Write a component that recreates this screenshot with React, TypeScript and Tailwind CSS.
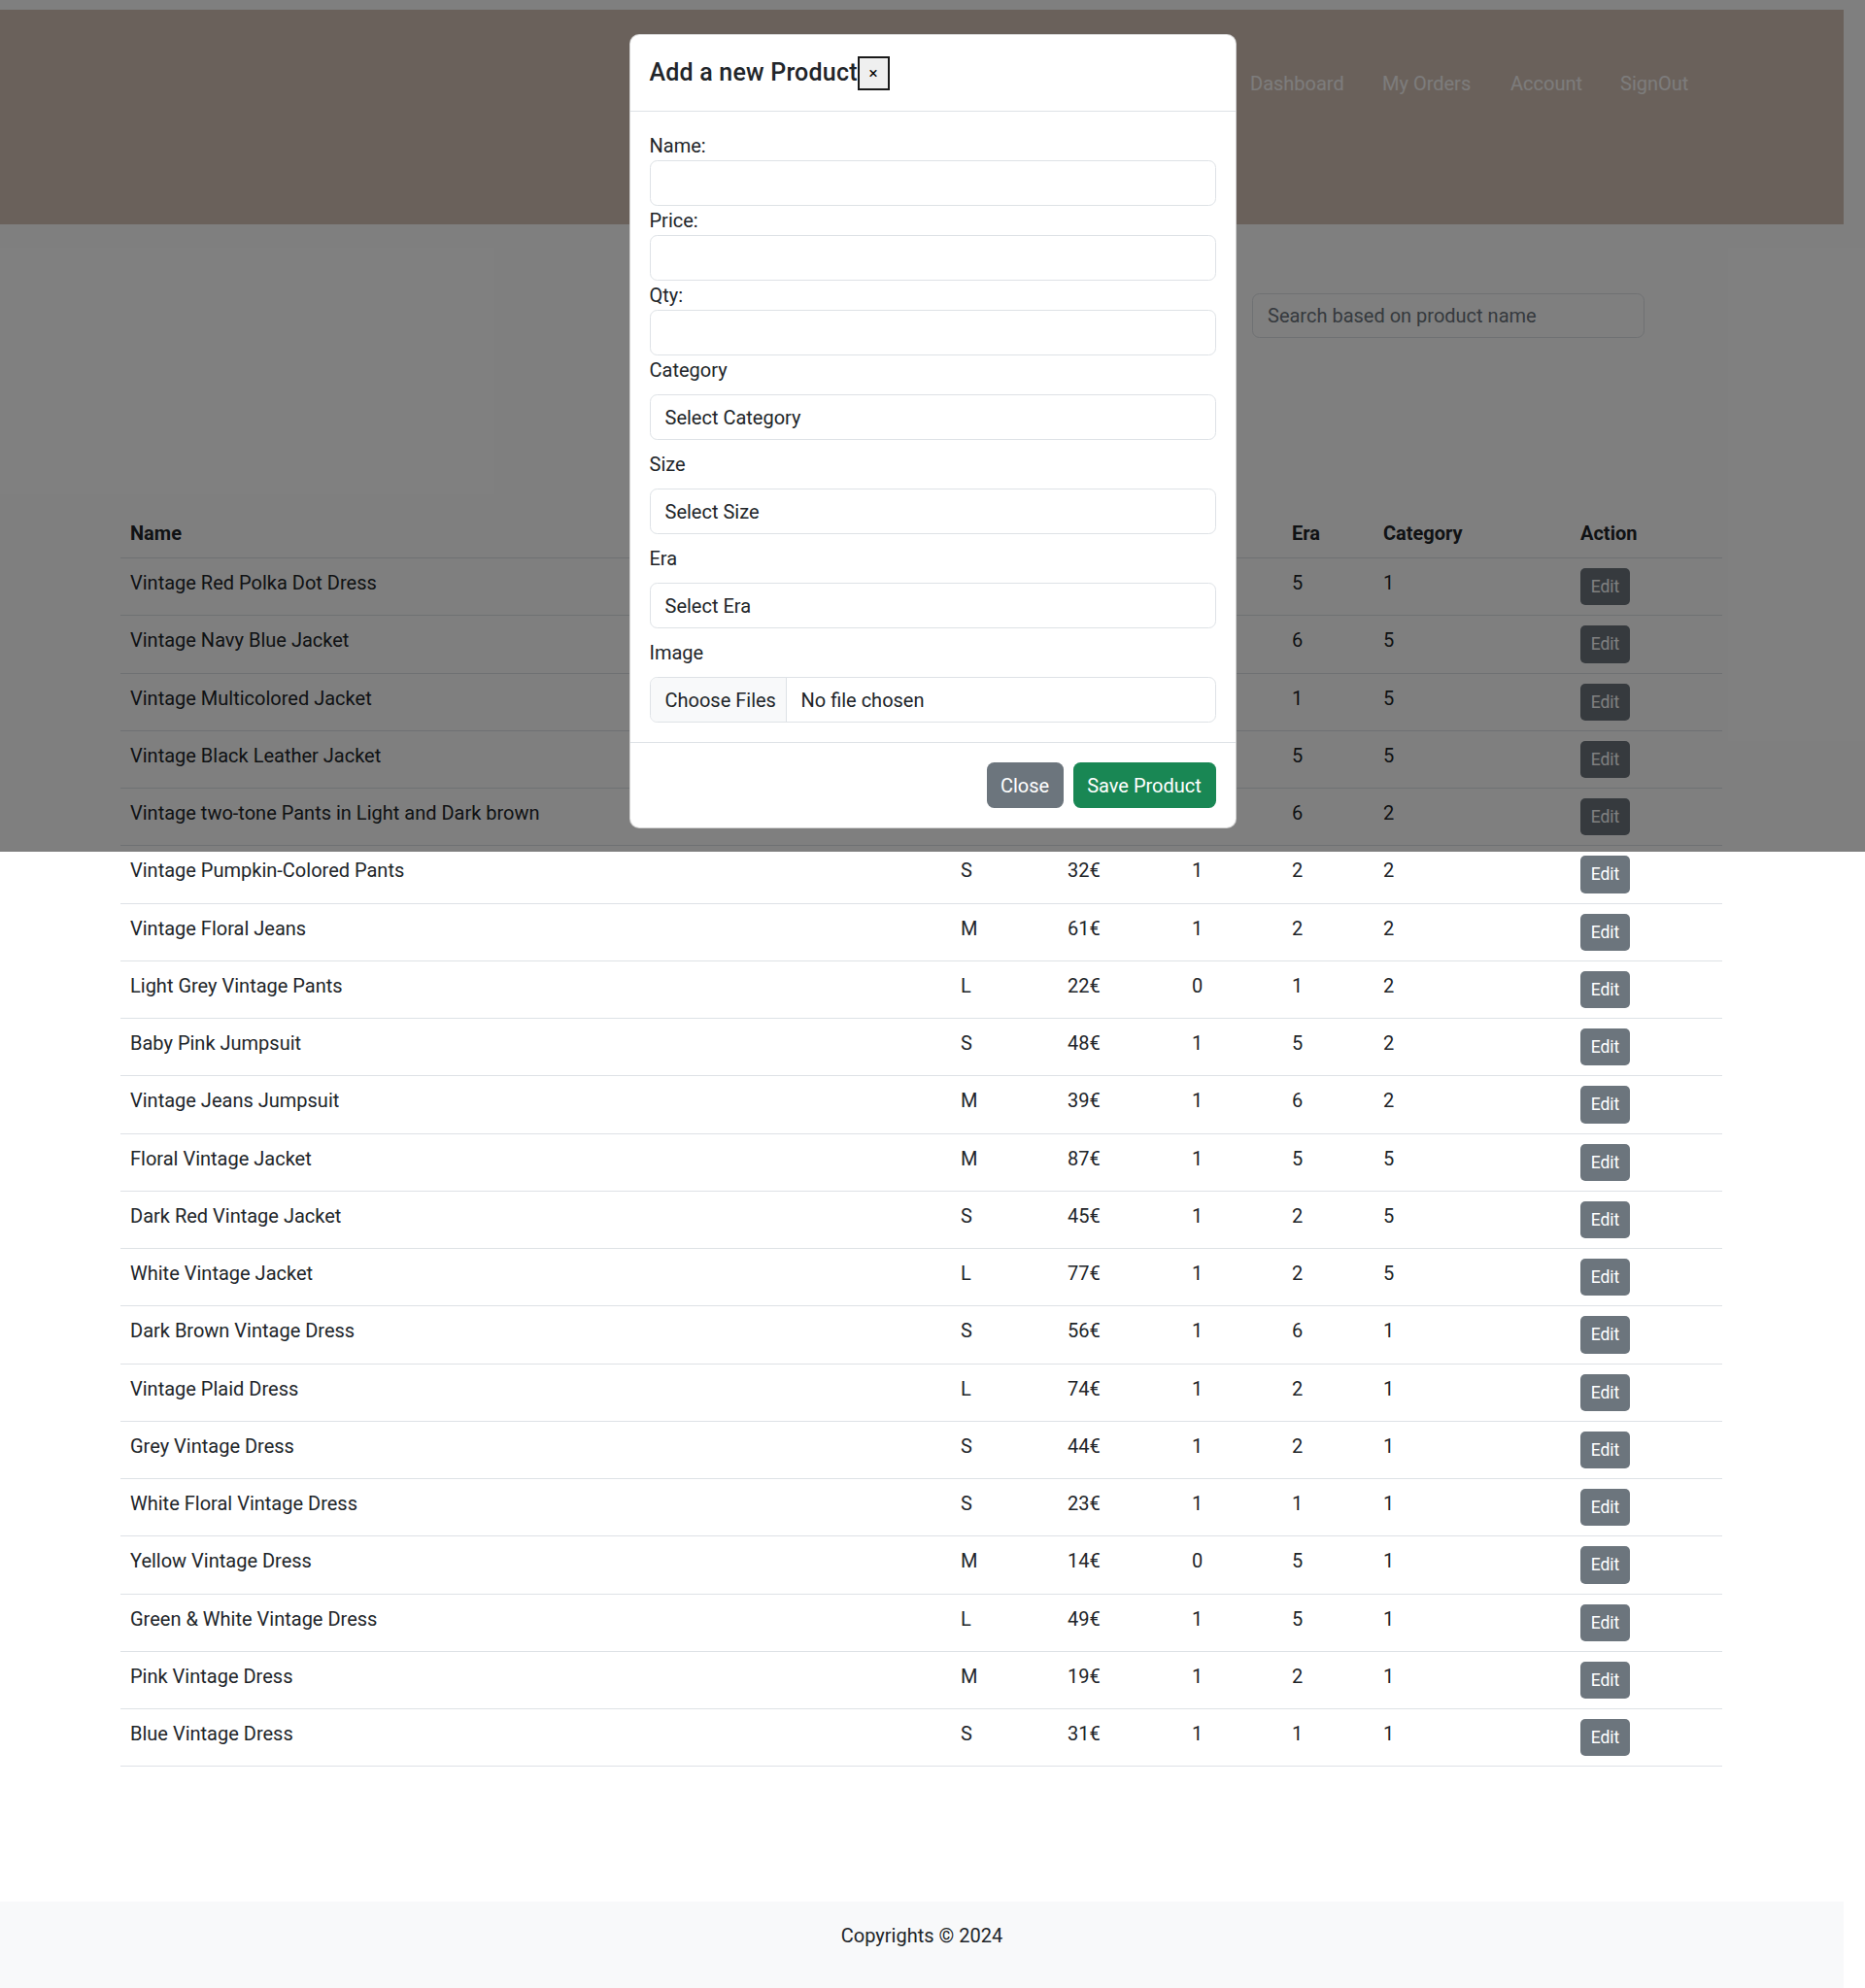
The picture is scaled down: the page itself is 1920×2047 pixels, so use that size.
import React from "react";

type Row = { name: string; size: string; price: string; qty: string; era: string; cat: string };

const rows: Row[] = [
  { name: "Vintage Red Polka Dot Dress", size: "S", price: "35€", qty: "1", era: "5", cat: "1" },
  { name: "Vintage Navy Blue Jacket", size: "M", price: "55€", qty: "1", era: "6", cat: "5" },
  { name: "Vintage Multicolored Jacket", size: "L", price: "65€", qty: "1", era: "1", cat: "5" },
  { name: "Vintage Black Leather Jacket", size: "M", price: "90€", qty: "1", era: "5", cat: "5" },
  { name: "Vintage two-tone Pants in Light and Dark brown", size: "S", price: "40€", qty: "1", era: "6", cat: "2" },
  { name: "Vintage Pumpkin-Colored Pants", size: "S", price: "32€", qty: "1", era: "2", cat: "2" },
  { name: "Vintage Floral Jeans", size: "M", price: "61€", qty: "1", era: "2", cat: "2" },
  { name: "Light Grey Vintage Pants", size: "L", price: "22€", qty: "0", era: "1", cat: "2" },
  { name: "Baby Pink Jumpsuit", size: "S", price: "48€", qty: "1", era: "5", cat: "2" },
  { name: "Vintage Jeans Jumpsuit", size: "M", price: "39€", qty: "1", era: "6", cat: "2" },
  { name: "Floral Vintage Jacket", size: "M", price: "87€", qty: "1", era: "5", cat: "5" },
  { name: "Dark Red Vintage Jacket", size: "S", price: "45€", qty: "1", era: "2", cat: "5" },
  { name: "White Vintage Jacket", size: "L", price: "77€", qty: "1", era: "2", cat: "5" },
  { name: "Dark Brown Vintage Dress", size: "S", price: "56€", qty: "1", era: "6", cat: "1" },
  { name: "Vintage Plaid Dress", size: "L", price: "74€", qty: "1", era: "2", cat: "1" },
  { name: "Grey Vintage Dress", size: "S", price: "44€", qty: "1", era: "2", cat: "1" },
  { name: "White Floral Vintage Dress", size: "S", price: "23€", qty: "1", era: "1", cat: "1" },
  { name: "Yellow Vintage Dress", size: "M", price: "14€", qty: "0", era: "5", cat: "1" },
  { name: "Green & White Vintage Dress", size: "L", price: "49€", qty: "1", era: "5", cat: "1" },
  { name: "Pink Vintage Dress", size: "M", price: "19€", qty: "1", era: "2", cat: "1" },
  { name: "Blue Vintage Dress", size: "S", price: "31€", qty: "1", era: "1", cat: "1" },
];

const td = "px-[10px] py-[10px] align-top border-b border-[#dee2e6] text-[20px] leading-[30px] text-[#212529]";
const th = "px-[10px] py-[10px] align-top border-b border-[#dee2e6] text-[20px] leading-[30px] text-left font-bold text-[#212529]";

function Label({ children, mb }: { children: React.ReactNode; mb?: boolean }) {
  return (
    <label className={"block text-[20px] leading-[30px] text-[#212529] " + (mb ? "mb-[10px]" : "")}>{children}</label>
  );
}

function TextInput() {
  return (
    <input
      type="text"
      className="block w-full h-[47px] rounded-[7.5px] border border-[#dee2e6] bg-white px-[15px] text-[20px] outline-none"
    />
  );
}

function SelectBox({ text }: { text: string }) {
  return (
    <div className="flex items-center w-full h-[47px] mb-[10px] rounded-[7.5px] border border-[#dee2e6] bg-white px-[15px] text-[20px] leading-[30px] text-[#212529]">
      {text}
    </div>
  );
}

export default function App() {
  return (
    <div className="relative w-[1920px] h-[2047px] bg-white font-['Roboto',sans-serif] text-[#212529] overflow-hidden">
      <div className="w-[1898px] pt-[10px] flex flex-col">
        {/* Navbar */}
        <header className="h-[221px] bg-[#d4c2b6]">
          <nav className="flex pt-[61px] pl-[1287px] text-[20px] leading-[30px] text-white/90">
            <a className="w-[136px]">Dashboard</a>
            <a className="w-[132px]">My Orders</a>
            <a className="w-[113px]">Account</a>
            <a>SignOut</a>
          </nav>
        </header>

        {/* Search */}
        <div className="flex pt-[71px] pl-[1289px]">
          <input
            type="text"
            placeholder="Search based on product name"
            className="w-[404px] h-[46px] rounded-[7.5px] border border-[#dee2e6] px-[15px] text-[20px] placeholder:text-[#6c757d] outline-none"
          />
        </div>

        {/* Table */}
        <div className="pt-[176px] pl-[124px]">
          <table className="w-[1649px] table-fixed border-collapse">
            <colgroup>
              <col className="w-[855px]" />
              <col className="w-[110px]" />
              <col className="w-[128px]" />
              <col className="w-[103px]" />
              <col className="w-[94px]" />
              <col className="w-[203px]" />
              <col className="w-[156px]" />
            </colgroup>
            <thead>
              <tr>
                <th className={th}>Name</th>
                <th className={th}>Size</th>
                <th className={th}>Price</th>
                <th className={th}>Qty</th>
                <th className={th}>Era</th>
                <th className={th}>Category</th>
                <th className={th}>Action</th>
              </tr>
            </thead>
            <tbody>
              {rows.map((r, i) => (
                <tr key={i}>
                  <td className={td}>{r.name}</td>
                  <td className={td}>{r.size}</td>
                  <td className={td}>{r.price}</td>
                  <td className={td}>{r.qty}</td>
                  <td className={td}>{r.era}</td>
                  <td className={td}>{r.cat}</td>
                  <td className={td}>
                    <button className="h-[38.25px] w-[51px] rounded-[5px] bg-[#6c757d] text-white text-[17.5px] leading-[26px]">
                      Edit
                    </button>
                  </td>
                </tr>
              ))}
            </tbody>
          </table>
        </div>

        {/* Footer */}
        <footer className="mt-[139px] h-[89px] bg-[#f8f9fa] pt-[20px]">
          <p className="text-center text-[20px] leading-[30px] text-[#212529]">Copyrights © 2024</p>
        </footer>
      </div>

      {/* Backdrop */}
      <div className="absolute left-0 top-0 w-[1920px] h-[877px] bg-black/50" />

      {/* Modal */}
      <div className="absolute left-[647.5px] top-[35px] w-[625px] bg-white border border-black/[0.175] rounded-[10px]">
        <div className="flex items-center h-[79px] px-[20px] border-b border-[#dee2e6]">
          <h5 className="text-[25px] leading-[30px] font-medium text-[#212529] tracking-[0.2px]">Add a new Product</h5>
          <button className="w-[33px] h-[35px] border-2 border-[#1a1a1a] bg-[#efefef] text-[17px] leading-none text-black">
            ×
          </button>
        </div>
        <div className="p-[20px]">
          <Label>Name:</Label>
          <TextInput />
          <Label>Price:</Label>
          <TextInput />
          <Label>Qty:</Label>
          <TextInput />
          <Label mb>Category</Label>
          <SelectBox text="Select Category" />
          <Label mb>Size</Label>
          <SelectBox text="Select Size" />
          <Label mb>Era</Label>
          <SelectBox text="Select Era" />
          <Label mb>Image</Label>
          <div className="flex w-full h-[47px] rounded-[7.5px] border border-[#dee2e6] overflow-hidden text-[20px] leading-[30px] text-[#212529]">
            <span className="flex shrink-0 items-center w-[140px] px-[15px] whitespace-nowrap bg-[#f8f9fa] border-r border-[#dee2e6]">
              Choose Files
            </span>
            <span className="flex items-center pl-[15px] whitespace-nowrap">No file chosen</span>
          </div>
        </div>
        <div className="flex justify-end gap-[10px] p-[20px] border-t border-[#dee2e6]">
          <button className="h-[47px] w-[79px] rounded-[7.5px] bg-[#6c757d] text-white text-[20px]">Close</button>
          <button className="h-[47px] w-[147px] rounded-[7.5px] bg-[#198754] text-white text-[20px]">Save Product</button>
        </div>
      </div>
    </div>
  );
}
